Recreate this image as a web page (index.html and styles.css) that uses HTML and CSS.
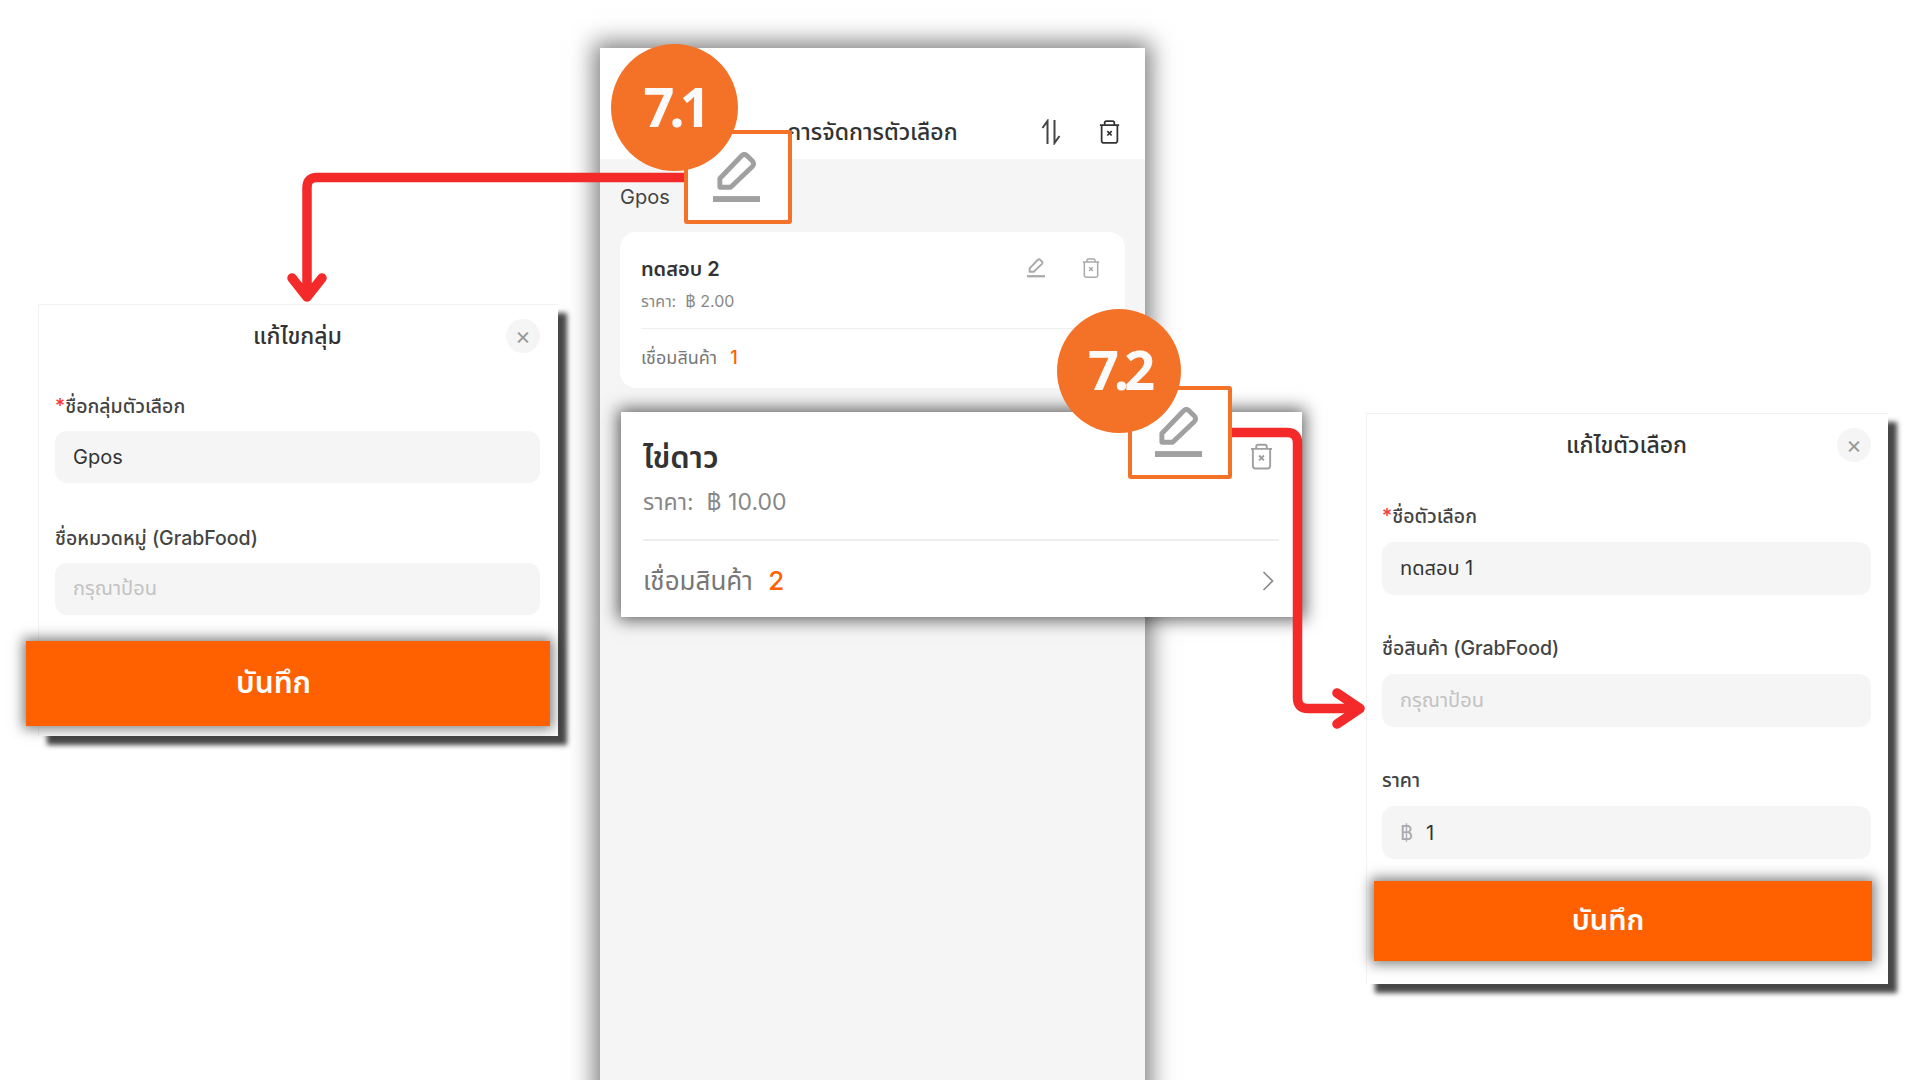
FILE: index.html
```html
<!DOCTYPE html>
<html lang="th">
<head>
    <meta charset="UTF-8">
    <meta name="viewport" content="width=device-width, initial-scale=1.0">
    <title>แก้ไขตัวเลือก</title>
    <link rel="stylesheet" href="styles.css">
</head>
<body>
    <svg class="icon-defs" width="0" height="0">
        <symbol id="pencil" viewBox="0 0 48 52">
            <path d="M7 36V27L29 4Q32 1 35 4L40 9Q43 12 40 15L18 36Z" fill="none" stroke="currentColor" stroke-width="5" stroke-linejoin="round"/>
            <rect x="0" y="45" width="48" height="6"  fill="currentColor"/>
        </symbol>
        <symbol id="trash" viewBox="0 0 24 27">
            <path d="M1 5.5H23M6.5 5V3.2A2 2 0 0 1 8.500 1.200H15.500A2 2 0 0 1 17.500 3.200V5M3 5.500V23.500A2.500 2.500 0 0 0 5.500 26H18.500A2.500 2.500 0 0 0 21 23.500V5.500" fill="none" stroke="currentColor" stroke-width="2"/>
            <path d="M9.500 12.500L14.500 17.500M14.500 12.500L9.500 17.500" fill="none" stroke="currentColor" stroke-width="2"/>
        </symbol>
    </svg>

    <div class="canvas">
        <div class="phone">
            <div class="phone-head">
                <span></span>
                <h1 class="phone-title">การจัดการตัวเลือก</h1>
                <div class="phone-actions">
                    <svg class="icon-sort" viewBox="0 0 20 26"><path d="M6.500 25V2L1.500 9M13.500 1V24L18.500 17" fill="none" stroke="currentColor" stroke-width="2"/></svg>
                    <svg class="icon-trash-dark"><use href="#trash"/></svg>
                </div>
            </div>
            <div class="phone-body">
                <div class="group-name">Gpos</div>
                <div class="option-card">
                    <div class="option-top">
                        <div class="option-name">ทดสอบ 2</div>
                        <div class="option-actions">
                            <svg class="icon-small"><use href="#pencil"/></svg>
                            <svg class="icon-small"><use href="#trash"/></svg>
                        </div>
                    </div>
                    <div class="option-price">ราคา:&nbsp; ฿ 2.00</div>
                    <div class="option-link">เชื่อมสินค้า <b class="count">1</b></div>
                </div>
            </div>
        </div>

        <div class="zoom-card">
            <div class="zoom-top">
                <div class="zoom-name">ไข่ดาว</div>
                <svg class="icon-zoom-trash"><use href="#trash"/></svg>
            </div>
            <div class="zoom-price">ราคา:&nbsp; ฿ 10.00</div>
            <div class="zoom-link">
                <span>เชื่อมสินค้า <b class="count">2</b></span>
                <svg class="icon-chevron" viewBox="0 0 12 20"><path d="M1.500 1L10.500 10L1.500 19" fill="none" stroke="currentColor" stroke-width="1.600"/></svg>
            </div>
        </div>

        <div class="modal modal-group">
            <div class="modal-head">
                <h2 class="modal-title">แก้ไขกลุ่ม</h2>
                <div class="modal-close">×</div>
            </div>
            <div class="field">
                <label class="field-label"><i class="req">*</i>ชื่อกลุ่มตัวเลือก</label>
                <div class="field-input">Gpos</div>
            </div>
            <div class="field">
                <label class="field-label">ชื่อหมวดหมู่ (GrabFood)</label>
                <div class="field-input placeholder">กรุณาป้อน</div>
            </div>
            <button class="save-btn">บันทึก</button>
        </div>

        <div class="modal modal-option">
            <div class="modal-head">
                <h2 class="modal-title">แก้ไขตัวเลือก</h2>
                <div class="modal-close">×</div>
            </div>
            <div class="field">
                <label class="field-label"><i class="req">*</i>ชื่อตัวเลือก</label>
                <div class="field-input">ทดสอบ 1</div>
            </div>
            <div class="field">
                <label class="field-label">ชื่อสินค้า (GrabFood)</label>
                <div class="field-input placeholder">กรุณาป้อน</div>
            </div>
            <div class="field">
                <label class="field-label">ราคา</label>
                <div class="field-input"><span class="baht">฿</span>1</div>
            </div>
            <button class="save-btn">บันทึก</button>
        </div>

        <!-- annotations drawn over the screens -->
        <svg class="arrows" viewBox="0 0 1920 1080">
            <path d="M684 177.500H317Q307 177.500 307 187.500V296M292 278L307 297L322 278" />
            <path d="M1232 432.500H1287Q1297.500 432.500 1297.500 443V698Q1297.500 708.500 1308 708.500H1358M1337 693L1360 708.500L1337 724" />
        </svg>

        <div class="callout callout-group"><svg class="icon-callout"><use href="#pencil"/></svg></div>
        <div class="callout callout-option"><svg class="icon-callout"><use href="#pencil"/></svg></div>
        <div class="badge badge-group">7.1</div>
        <div class="badge badge-option">7.2</div>
    </div>
</body>
</html>
```

FILE: styles.css
```css
* {
    margin: 0;
    padding: 0;
    box-sizing: border-box;
}

body {
    font-family: 'Inter', 'Noto Sans Thai', 'Noto Sans', 'Liberation Sans', sans-serif;
    background: white;
    color: #333;
}

.icon-defs {
    position: absolute;
}

.canvas {
    position: relative;
    width: 1920px;
    height: 1080px;
    overflow: hidden;
    background: white;
}

/* phone screen in the middle */
.phone {
    position: absolute;
    left: 600px;
    top: 48px;
    width: 545px;
    height: 1060px;
    display: flex;
    flex-direction: column;
    box-shadow: 0 0 22px 6px rgba(0,0,0,0.5);
}

.phone-head {
    height: 111px;
    padding: 58px 25px 0;
    display: grid;
    grid-template-columns: 1fr auto 1fr;
    align-items: center;
    background: white;
}

.phone-title {
    font-size: 23px;
    font-weight: 500;
    color: #333;
    white-space: nowrap;
}

.phone-actions {
    display: flex;
    justify-content: flex-end;
    align-items: center;
    gap: 38px;
    margin-bottom: 2px;
}

.icon-sort {
    width: 20px;
    height: 26px;
    color: #444;
}

.icon-trash-dark {
    width: 21px;
    height: 24px;
    color: #333;
}

.phone-body {
    flex: 1;
    padding: 23px 20px 0;
    background: #f5f5f5;
}

.group-name {
    font-size: 20px;
    line-height: 30px;
    color: #444;
    margin-bottom: 20px;
}

.option-card {
    height: 156px;
    padding: 25px 21px 0;
    background: white;
    border-radius: 16px;
}

.option-top {
    display: flex;
    justify-content: space-between;
    align-items: center;
}

.option-name {
    font-size: 20px;
    line-height: 24px;
    font-weight: 600;
    color: #333;
}

.option-actions {
    display: flex;
    gap: 37px;
    color: #a9a9a9;
    margin: -2px 4px 0 0;
}

.icon-small {
    width: 18px;
    height: 20px;
}

.option-price {
    margin-top: 10px;
    padding-bottom: 17px;
    font-size: 16px;
    line-height: 20px;
    color: #888;
    border-bottom: 1px solid #eee;
}

.option-link {
    margin-top: 17px;
    font-size: 18px;
    line-height: 24px;
    color: #777;
}

.count {
    margin-left: 8px;
    color: #ff6000;
    font-weight: 500;
}

/* enlarged copy of the second option */
.zoom-card {
    position: absolute;
    left: 621px;
    top: 412px;
    width: 681px;
    height: 205px;
    padding: 27px 23px 0 22px;
    background: white;
    box-shadow: 0 0 16px 3px rgba(0,0,0,0.62);
}

.zoom-top {
    display: flex;
    justify-content: space-between;
    align-items: center;
}

.zoom-name {
    font-size: 31px;
    line-height: 36px;
    font-weight: 600;
    color: #333;
}

.icon-zoom-trash {
    width: 23px;
    height: 27px;
    margin: 0 6px 1px 0;
    color: #a0a0a0;
}

.zoom-price {
    margin-top: 13px;
    padding-bottom: 23px;
    font-size: 23px;
    line-height: 28px;
    color: #888;
    border-bottom: 2px solid #eee;
}

.zoom-link {
    margin-top: 24px;
    display: flex;
    justify-content: space-between;
    align-items: center;
    font-size: 26px;
    line-height: 32px;
    color: #777;
}

.icon-chevron {
    width: 12px;
    height: 20px;
    margin-right: 5px;
    color: #888;
}

/* edit dialogs */
.modal {
    position: absolute;
    background: white;
    border-top: 1px solid #f2f2f2;
    border-left: 1px solid #f2f2f2;
    box-shadow: 9px 9px 5px rgba(0,0,0,0.72);
}

.modal-group {
    left: 38px;
    top: 304px;
    width: 520px;
    height: 432px;
    padding: 0 18px 0 16px;
}

.modal-option {
    left: 1366px;
    top: 413px;
    width: 522px;
    height: 571px;
    padding: 0 17px 0 15px;
}

.modal-head {
    position: relative;
    height: 64px;
    margin-bottom: 27px;
    display: flex;
    justify-content: center;
    align-items: center;
}

.modal-option .modal-head {
    margin-bottom: 28px;
}

.modal-title {
    font-size: 23px;
    font-weight: 500;
    color: #333;
}

.modal-close {
    position: absolute;
    right: 0;
    top: 14px;
    width: 34px;
    height: 34px;
    border-radius: 50%;
    background: #f5f5f5;
    color: #999;
    font-size: 24px;
    line-height: 33px;
    text-align: center;
}

.field {
    margin-bottom: 43px;
}

.modal-group .field {
    margin-bottom: 45px;
}

.field-label {
    display: block;
    margin: -2px 0 14px;
    font-size: 19.500px;
    line-height: 24px;
    font-weight: 500;
    color: #444;
}

.modal-group .field-label {
    margin-bottom: 13px;
}

.req {
    color: #f33;
    font-style: normal;
}

.field-input {
    height: 52px;
    padding: 0 18px;
    display: flex;
    align-items: center;
    background: #f5f5f5;
    border-radius: 12px;
    font-size: 20px;
    color: #333;
}

.modal-option .field-input {
    height: 53px;
}

.placeholder {
    color: #c2c2c2;
}

.baht {
    margin-right: 13px;
    color: #aaa;
}

.save-btn {
    display: block;
    border: none;
    background: #ff6000;
    color: white;
    font-family: inherit;
    font-weight: 600;
    box-shadow: 0 0 12px 3px rgba(0,0,0,0.5);
}

.modal-group .save-btn {
    width: 524px;
    height: 85px;
    margin: -19px 0 0 -29px;
    padding-right: 29px;
    font-size: 30px;
}

.modal-option .save-btn {
    width: 498px;
    height: 80px;
    margin: -21px 0 0 -8px;
    padding-right: 30px;
    font-size: 29px;
}

/* annotations */
.arrows {
    position: absolute;
    left: 0;
    top: 0;
    width: 1920px;
    height: 1080px;
}

.arrows path {
    fill: none;
    stroke: #f42a2a;
    stroke-width: 9.500;
    stroke-linecap: round;
    stroke-linejoin: round;
}

.callout {
    position: absolute;
    display: flex;
    justify-content: center;
    align-items: center;
    background: white;
    border: 4px solid #f47227;
    border-radius: 3px;
    color: #a0a0a0;
}

.callout-group {
    left: 684px;
    top: 130px;
    width: 108px;
    height: 94px;
}

.callout-option {
    left: 1128px;
    top: 386px;
    width: 104px;
    height: 93px;
}

.icon-callout {
    width: 47px;
    height: 51px;
    margin-right: 4px;
}

.badge {
    position: absolute;
    display: flex;
    justify-content: center;
    align-items: center;
    padding-bottom: 4px;
    background: #f47227;
    border-radius: 50%;
    color: #fafafa;
    font-family: 'Open Sans', sans-serif;
    font-size: 54px;
    font-weight: 700;
    letter-spacing: -5px;
}

.badge-group {
    left: 611px;
    top: 44px;
    width: 127px;
    height: 127px;
}

.badge-option {
    left: 1057px;
    top: 309px;
    width: 124px;
    height: 124px;
}
```
